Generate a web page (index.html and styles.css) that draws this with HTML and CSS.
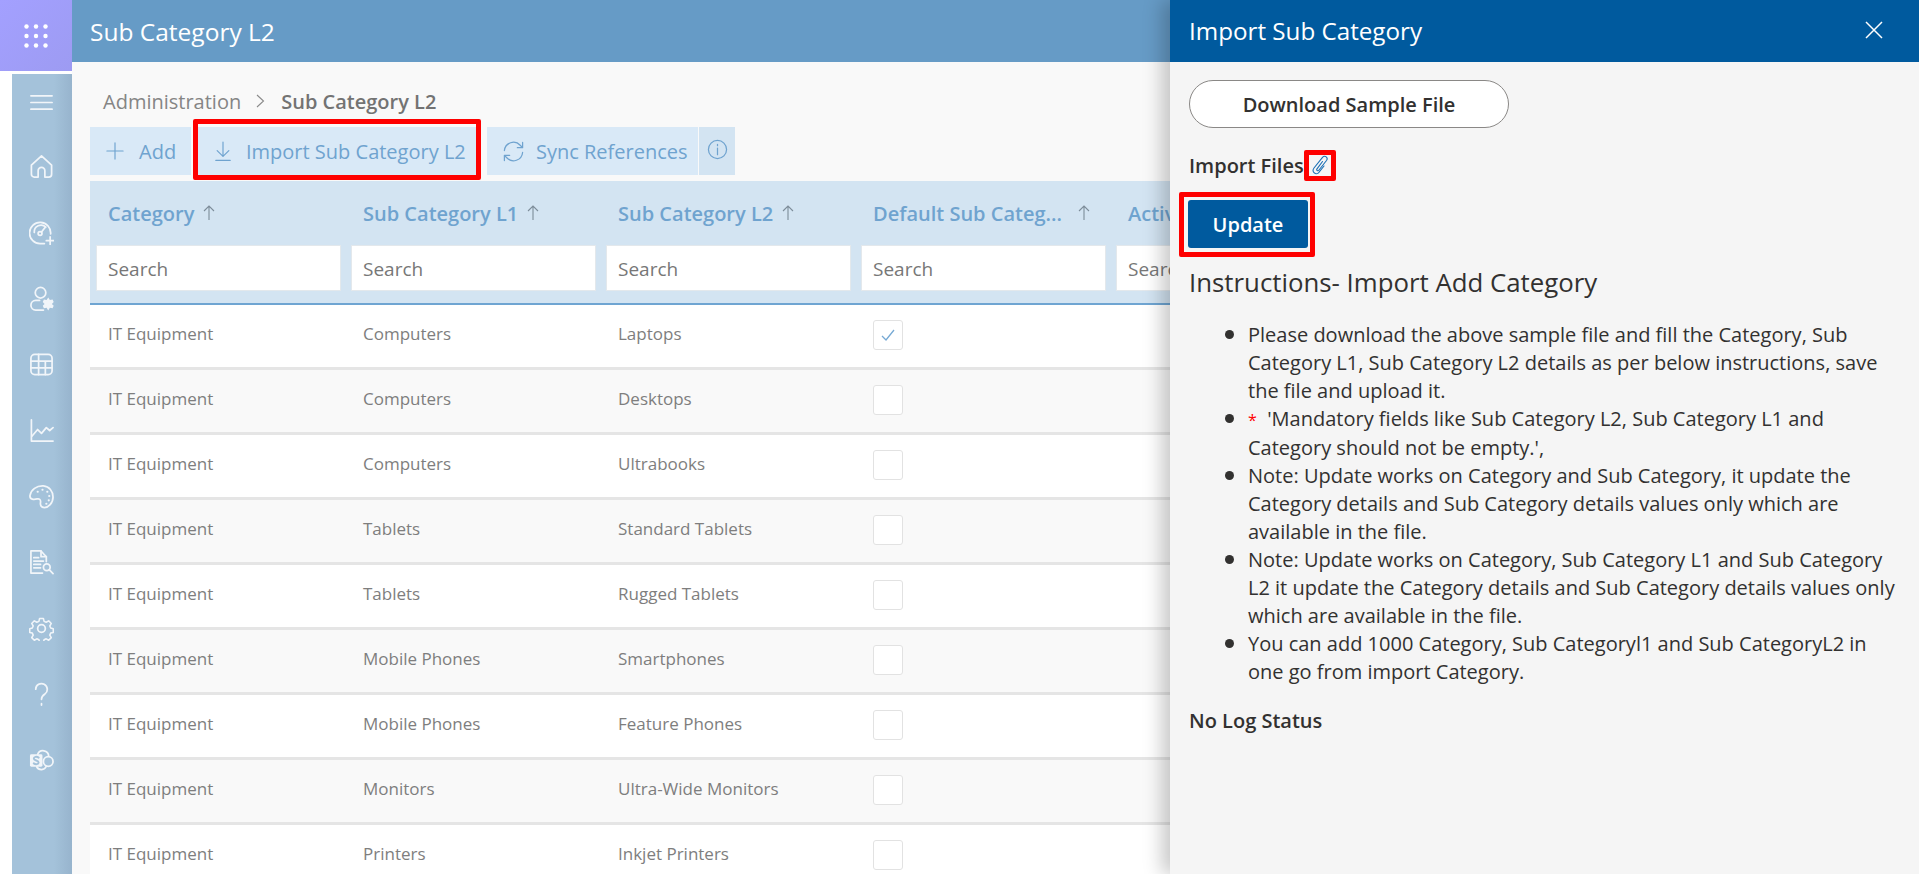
FILE: index.html
```html
<!DOCTYPE html>
<html lang="en">
<head>
  <meta charset="UTF-8">
  <title>Sub Category L2</title>
  <link rel="stylesheet" href="styles.css">
</head>
<body>
  <div class="page">
    <div class="rail">
      <div class="launcher">
        <svg width="24" height="24" viewBox="0 0 24 24" fill="#fff">
          <circle cx="2.5" cy="2.5" r="2.2"/><circle cx="12" cy="2.5" r="2.2"/><circle cx="21.5" cy="2.5" r="2.2"/>
          <circle cx="2.5" cy="12" r="2.2"/><circle cx="12" cy="12" r="2.2"/><circle cx="21.5" cy="12" r="2.2"/>
          <circle cx="2.5" cy="21.5" r="2.2"/><circle cx="12" cy="21.5" r="2.2"/><circle cx="21.5" cy="21.5" r="2.2"/>
        </svg>
      </div>
      <nav class="side-nav">
        <div class="nav-item nav-toggle">
          <svg class="nav-icon" viewBox="0 0 26 26"><path d="M2 6h22M2 13h22M2 20h22"/></svg>
        </div>
        <div class="nav-item">
          <svg class="nav-icon" viewBox="0 0 26 26"><path d="M2.500 11.500 13 2l10.500 9.500V21a3 3 0 0 1-3 3h-4v-6.500a3.500 3.500 0 0 0-7 0V24h-4a3 3 0 0 1-3-3z"/></svg>
        </div>
        <div class="nav-item">
          <svg class="nav-icon" viewBox="0 0 26 26"><path d="M22.500 14.500A11 11 0 1 0 12 24.500h4"/><path d="M5.500 13A7 7 0 0 1 17.500 7.500"/><circle cx="11.500" cy="14" r="2"/><path d="m13 12.500 3.500-4.500M22 17.500v8M18 21.500h8"/></svg>
        </div>
        <div class="nav-item">
          <svg class="nav-icon" viewBox="0 0 26 26"><circle cx="12" cy="7" r="5.500"/><path d="M11 15H7a5 5 0 0 0 0 10h8"/><path class="nav-fill" d="m20 12 1.700 2.500 2.800-.5 1.200 2.600-1.900 2 1.900 2-1.200 2.600-2.800-.5L20 25.500l-1.700-2.800-2.800.5-1.200-2.600 1.900-2-1.900-2 1.200-2.600 2.800.5z"/></svg>
        </div>
        <div class="nav-item">
          <svg class="nav-icon" viewBox="0 0 26 26"><rect x="2" y="2.500" width="22" height="21" rx="4"/><path d="M2 9.500h22M2 16.500h22M10 2.500v21M17 9.500v14"/></svg>
        </div>
        <div class="nav-item">
          <svg class="nav-icon" viewBox="0 0 26 26"><path d="M2.500 2v22H25"/><path d="m3 19 6-7 4 4 5-6 3.500 3 3.500-3"/></svg>
        </div>
        <div class="nav-item">
          <svg class="nav-icon" viewBox="0 0 26 26"><path d="M1 12C2 6 8 1.500 15 2c6 .5 10 5.500 10 11.500 0 6.500-5 11-9 11-3.500 0-4.500-2.500-4-5.500.3-2.500-1-4-3.500-3.500C5.500 16.200 .5 16.500 1 12z"/><path class="nav-dots" d="M9 8h.1M14 6h.1M19 8h.1M21 12.500h.1M20.500 17h.1M18 20.500h.1"/></svg>
        </div>
        <div class="nav-item">
          <svg class="nav-icon" viewBox="0 0 26 26"><path d="M18 12V7l-5.500-6H2v23h12"/><path d="M12.500 1v6H18"/><path d="M5 8h5M5 11.500h10M5 15h7M5 18.500h7"/><circle cx="18.500" cy="18" r="3.500"/><path d="m21 20.500 4 4"/></svg>
        </div>
        <div class="nav-item">
          <svg class="nav-icon" viewBox="0 0 26 26"><circle cx="13" cy="13" r="4"/><path d="M10.800 1.500h4.400l.8 3.300 2.400 1 2.900-1.700 3 3.100-1.700 2.900 1 2.400 3 .8v4.200l-3 .8-1 2.400 1.700 2.900-3 3-2.900-1.700-2.400 1-.8 3h-4.400l-.8-3-2.400-1-2.900 1.700-3-3 1.700-2.900-1-2.400-3-.8v-4.200l3-.8 1-2.400-1.700-2.900 3-3.100 2.900 1.700 2.400-1z" transform="translate(1.300 1.300) scale(.9)"/></svg>
        </div>
        <div class="nav-item">
          <svg class="nav-icon" viewBox="0 0 26 26"><path d="M7 7.500a6 6 0 1 1 9.500 5c-2.200 1.500-3.500 2.800-3.500 5.500"/><path d="M13 22.500v1.500"/></svg>
        </div>
        <div class="nav-item">
          <svg class="nav-icon" viewBox="0 0 26 26"><path d="M9 6.500a6 6 0 0 1 11.500 2"/><circle cx="20" cy="14" r="5"/><path d="M8 19.500a5.500 5.500 0 0 0 10-.5"/><rect class="nav-fill" x="1" y="6.500" width="13" height="13" rx="1.500"/><path class="nav-s" d="M10 10c-2-1.500-5-.8-5 1 0 2.500 5 1.500 5 4 0 1.800-3 2.500-5 1"/></svg>
        </div>
      </nav>
    </div>

    <div class="main">
      <header class="topbar">Sub Category L2</header>
      <div class="content">
        <div class="breadcrumb">
          <span>Administration</span>
          <svg class="crumb-sep" width="9" height="14" viewBox="0 0 9 14"><path d="m1 1 6.500 6L1 13"/></svg>
          <strong>Sub Category L2</strong>
        </div>

        <div class="toolbar">
          <button class="tool tool-add">
            <svg class="tool-icon" viewBox="0 0 20 20"><path d="M10 1v18M1 10h18"/></svg>Add
          </button>
          <button class="tool tool-import marked">
            <svg class="tool-icon" viewBox="0 0 20 24"><path d="M10 2v16M3.500 11.500 10 18l6.500-6.500M2 22.500h16"/></svg>Import Sub Category L2
          </button>
          <button class="tool tool-sync">
            <svg class="tool-icon" viewBox="0 0 24 24"><path d="M2.500 11A9.500 9.500 0 0 1 19 5.500l2.500 2.500M21.500 2.500V8H16M21.500 13A9.500 9.500 0 0 1 5 18.500L2.500 16M2.500 21.500V16H8"/></svg>Sync References
          </button>
          <button class="tool tool-info">
            <svg class="tool-icon" viewBox="0 0 22 22"><circle cx="11" cy="11" r="9.500"/><path d="M11 9.500v7M11 5.500v1.500"/></svg>
          </button>
        </div>

        <div class="grid-wrap">
          <div class="grid-head">
            <div class="head-col">
              <div class="head-title"><span>Category</span><svg class="sort" viewBox="0 0 12 16"><path d="M6 15V1M1 6l5-5 5 5"/></svg></div>
              <input class="search" placeholder="Search">
            </div>
            <div class="head-col">
              <div class="head-title"><span>Sub Category L1</span><svg class="sort" viewBox="0 0 12 16"><path d="M6 15V1M1 6l5-5 5 5"/></svg></div>
              <input class="search" placeholder="Search">
            </div>
            <div class="head-col">
              <div class="head-title"><span>Sub Category L2</span><svg class="sort" viewBox="0 0 12 16"><path d="M6 15V1M1 6l5-5 5 5"/></svg></div>
              <input class="search" placeholder="Search">
            </div>
            <div class="head-col">
              <div class="head-title"><span>Default Sub Categ...</span><svg class="sort sort-far" viewBox="0 0 12 16"><path d="M6 15V1M1 6l5-5 5 5"/></svg></div>
              <input class="search" placeholder="Search">
            </div>
            <div class="head-col">
              <div class="head-title"><span>Active</span></div>
              <input class="search" placeholder="Search">
            </div>
          </div>

          <div class="row"><div class="cell">IT Equipment</div><div class="cell">Computers</div><div class="cell">Laptops</div><div class="cell"><span class="check checked"><svg width="16" height="14" viewBox="0 0 16 14"><path d="m2 8 4 4 8-10"/></svg></span></div></div>
          <div class="row"><div class="cell">IT Equipment</div><div class="cell">Computers</div><div class="cell">Desktops</div><div class="cell"><span class="check"></span></div></div>
          <div class="row"><div class="cell">IT Equipment</div><div class="cell">Computers</div><div class="cell">Ultrabooks</div><div class="cell"><span class="check"></span></div></div>
          <div class="row"><div class="cell">IT Equipment</div><div class="cell">Tablets</div><div class="cell">Standard Tablets</div><div class="cell"><span class="check"></span></div></div>
          <div class="row"><div class="cell">IT Equipment</div><div class="cell">Tablets</div><div class="cell">Rugged Tablets</div><div class="cell"><span class="check"></span></div></div>
          <div class="row"><div class="cell">IT Equipment</div><div class="cell">Mobile Phones</div><div class="cell">Smartphones</div><div class="cell"><span class="check"></span></div></div>
          <div class="row"><div class="cell">IT Equipment</div><div class="cell">Mobile Phones</div><div class="cell">Feature Phones</div><div class="cell"><span class="check"></span></div></div>
          <div class="row"><div class="cell">IT Equipment</div><div class="cell">Monitors</div><div class="cell">Ultra-Wide Monitors</div><div class="cell"><span class="check"></span></div></div>
          <div class="row"><div class="cell">IT Equipment</div><div class="cell">Printers</div><div class="cell">Inkjet Printers</div><div class="cell"><span class="check"></span></div></div>
        </div>
      </div>
    </div>

    <aside class="panel">
      <div class="panel-head">
        <span>Import Sub Category</span>
        <svg class="panel-close" width="18" height="18" viewBox="0 0 18 18"><path d="m1 1 16 16M17 1 1 17"/></svg>
      </div>
      <div class="panel-body">
        <button class="btn-sample">Download Sample File</button>
        <div class="import-row">
          <span>Import Files</span>
          <span class="clip marked">
            <svg width="18" height="20" viewBox="0 0 18 20"><path d="M11.500 6.500 6 13.800C5 15.300 6.800 16.500 8 15l7.500-9.500C17.500 2.800 14-.2 11.500 2.300L3 13c-2.500 3.200 1 7.800 4.500 4.800L13 11"/></svg>
          </span>
        </div>
        <button class="btn-update marked">Update</button>
        <h3 class="panel-title">Instructions- Import Add Category</h3>
        <ul class="notes">
          <li>Please download the above sample file and fill the Category, Sub Category L1, Sub Category L2 details as per below instructions, save the file and upload it.</li>
          <li><span class="req">*</span>&nbsp; 'Mandatory fields like Sub Category L2, Sub Category L1 and Category should not be empty.',</li>
          <li>Note: Update works on Category and Sub Category, it update the Category details and Sub Category details values only which are available in the file.</li>
          <li>Note: Update works on Category, Sub Category L1 and Sub Category L2 it update the Category details and Sub Category details values only which are available in the file.</li>
          <li>You can add 1000 Category, Sub Categoryl1 and Sub CategoryL2 in one go from import Category.</li>
        </ul>
        <div class="log-status">No Log Status</div>
      </div>
    </aside>
  </div>
</body>
</html>
```

FILE: styles.css
```css
* {
  box-sizing: border-box;
}
body {
  margin: 0;
  font-family: "Open Sans", "Noto Sans", sans-serif;
  background: #fff;
  overflow: hidden;
}
button, input {
  font-family: inherit;
}
.page {
  position: relative;
  display: flex;
  width: 100%;
  height: 874px;
  overflow: hidden;
}

/* left rail */
.rail {
  width: 72px;
  flex: none;
  display: flex;
  flex-direction: column;
}
.launcher {
  height: 71px;
  flex: none;
  display: flex;
  align-items: center;
  justify-content: center;
  background: linear-gradient(135deg, #a3a0ff, #9d9bf2);
}
.side-nav {
  flex: 1;
  margin: 3px 0 0 12px;
  background: linear-gradient(90deg, #a4c2da 70%, #97b4cd);
}
.nav-item {
  height: 66px;
  display: flex;
  align-items: center;
  justify-content: center;
  padding-right: 1px;
}
.nav-toggle {
  height: 56px;
  margin-bottom: 3px;
}
.nav-icon {
  width: 25px;
  height: 25px;
  fill: none;
  stroke: #f1f5f9;
  stroke-width: 1.8;
  stroke-linecap: round;
  stroke-linejoin: round;
}
.nav-icon .nav-fill {
  fill: #f1f5f9;
  stroke: none;
}
.nav-icon .nav-dots {
  stroke-width: 2.200;
}
.nav-icon .nav-s {
  stroke: #a4c2da;
  stroke-width: 2;
}

/* main */
.main {
  flex: 1;
  min-width: 0;
  background: #f9f9f9;
  display: flex;
  flex-direction: column;
}
.topbar {
  height: 62px;
  flex: none;
  padding: 0 18px;
  display: flex;
  align-items: center;
  background: #669bc6;
  color: #fff;
  font-size: 24.500px;
}
.content {
  padding-left: 18px;
  min-width: 0;
}
.breadcrumb {
  height: 65px;
  padding: 13px 0 0 13px;
  display: flex;
  align-items: center;
  color: #858585;
  font-size: 20px;
}
.breadcrumb strong {
  font-weight: 600;
  color: #737373;
}
.crumb-sep {
  margin: 0 16px 0 15px;
  fill: none;
  stroke: #8a8a8a;
  stroke-width: 1.1;
}

/* toolbar */
.toolbar {
  display: flex;
  margin-bottom: 6px;
}
.tool {
  height: 48px;
  border: 0;
  padding: 0;
  display: flex;
  align-items: center;
  background: #d9e9f7;
  color: #6fa3cf;
  font-size: 20px;
  white-space: nowrap;
}
.tool-icon {
  flex: none;
  fill: none;
  stroke: #6fa3cf;
  stroke-width: 1.300;
  stroke-linecap: round;
  stroke-linejoin: round;
}
.tool-add {
  width: 101px;
  padding-left: 16px;
}
.tool-add .tool-icon {
  width: 18px;
  height: 18px;
  margin-right: 15px;
}
.tool-import {
  width: 280px;
  margin-left: 6px;
  padding-left: 17px;
}
.tool-import .tool-icon {
  width: 18px;
  height: 22px;
  margin-right: 14px;
}
.tool-sync {
  width: 211px;
  margin-left: 10px;
  padding-left: 15px;
}
.tool-sync .tool-icon {
  width: 23px;
  height: 23px;
  margin-right: 11px;
}
.tool-info {
  width: 36px;
  margin-left: 1px;
  justify-content: center;
  background: #d3e4f2;
  padding-bottom: 3px;
}
.tool-info .tool-icon {
  width: 21px;
  height: 21px;
}

/* red marks from the screenshot annotation */
.marked {
  position: relative;
}
.marked::after {
  content: "";
  position: absolute;
  border: 5px solid #fe0000;
  border-radius: 2px;
}
.tool-import.marked::after {
  inset: -8px -4px -5px -4px;
}
.clip.marked::after {
  inset: 0;
}
.btn-update.marked::after {
  inset: -8px -7px -9px -9px;
}

/* grid */
.grid-wrap {
  width: 1400px;
}
.grid-head {
  display: flex;
  height: 124px;
  background: #d3e4f2;
  border-bottom: 2px solid #6fa5d2;
}
.head-col {
  width: 255px;
  flex: none;
  padding: 0 6px;
}
.head-title {
  height: 64px;
  padding-left: 12px;
  display: flex;
  align-items: center;
  color: #6fa3cf;
  font-size: 20px;
  font-weight: 600;
}
.sort {
  width: 12px;
  height: 16px;
  margin-left: 9px;
  fill: none;
  stroke: #7d8d9a;
  stroke-width: 1.100;
}
.sort-far {
  margin-left: 16px;
}
.search {
  display: block;
  width: 245px;
  height: 46px;
  border: 1px solid #e3e8ec;
  padding: 2px 11px 0;
  background: #fff;
  font-size: 19px;
  outline: none;
}
.search::placeholder {
  color: #777;
  opacity: 1;
}
.row {
  display: flex;
  height: 65px;
  padding-bottom: 6px;
  background: #fff;
  border-bottom: 3px solid #e5e5e5;
}
.row:nth-child(odd) {
  background: #f9f9f9;
}
.cell {
  width: 255px;
  flex: none;
  padding-left: 18px;
  display: flex;
  align-items: center;
  color: #7e7e7e;
  font-size: 17px;
}
.check {
  display: block;
  width: 30px;
  height: 30px;
  margin-top: 4px;
  border: 1px solid #e2e2e2;
  border-radius: 3px;
  background: #fff;
  text-align: center;
  line-height: 30px;
}
.check svg {
  fill: none;
  stroke: #76a9d4;
  stroke-width: 1.300;
}

/* import panel */
.panel {
  position: absolute;
  top: 0;
  right: 0;
  bottom: 0;
  width: 749px;
  background: #f5f5f5;
  box-shadow: -8px 0 18px rgba(0, 0, 0, 0.22);
  color: #323130;
}
.panel-head {
  height: 62px;
  padding: 0 36px 2px 19px;
  display: flex;
  align-items: center;
  justify-content: space-between;
  background: #005a9e;
  color: #fff;
  font-size: 24.200px;
}
.panel-close {
  fill: none;
  stroke: #fff;
  stroke-width: 1.500;
}
.panel-body {
  padding: 18px 19px 0;
}
.btn-sample {
  display: block;
  width: 320px;
  height: 48px;
  border: 1px solid #8a8886;
  border-radius: 24px;
  background: #fff;
  color: #323130;
  font-size: 20px;
  font-weight: 600;
}
.import-row {
  display: flex;
  align-items: center;
  height: 32px;
  margin-top: 21px;
  font-size: 20px;
  font-weight: 600;
}
.clip {
  width: 32px;
  height: 31px;
  display: flex;
  align-items: center;
  justify-content: center;
}
.clip svg {
  fill: none;
  stroke: #1a6fb5;
  stroke-width: 1.100;
  stroke-linecap: round;
}
.btn-update {
  display: block;
  width: 120px;
  height: 48px;
  margin: 19px 0 0 -1px;
  border: 0;
  border-radius: 3px;
  background: #005a9e;
  color: #fff;
  font-size: 20px;
  font-weight: 600;
}
.panel-title {
  margin: 14px 0 0;
  font-size: 25.800px;
  line-height: 40px;
  font-weight: 400;
}
.notes {
  margin: 19px 0 0;
  padding: 0 0 0 59px;
  list-style: none;
  font-size: 20px;
  line-height: 28px;
}
.notes li {
  position: relative;
}
.notes li::before {
  content: "";
  position: absolute;
  left: -23px;
  top: 9px;
  width: 9px;
  height: 9px;
  border-radius: 50%;
  background: #323130;
}
.req {
  color: #f00;
  font-size: 16px;
}
.log-status {
  margin-top: 21px;
  font-size: 20px;
  line-height: 28px;
  font-weight: 600;
}
```
